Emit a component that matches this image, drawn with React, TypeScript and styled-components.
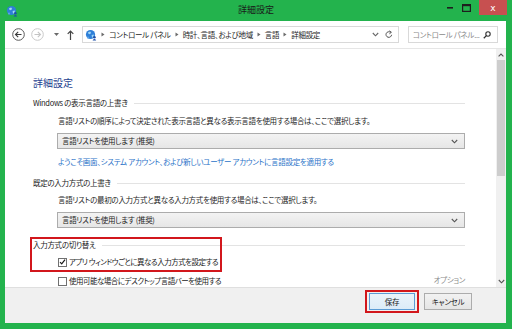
import React from 'react';
import styled, { createGlobalStyle, css } from 'styled-components';

const GlobalStyle = createGlobalStyle`
  html, body {
    margin: 0;
    padding: 0;
    width: 512px;
    height: 329px;
    overflow: hidden;
    background: #23b34d;
  }
  * { box-sizing: border-box; }
  body {
    font-family: "Noto Sans CJK JP", "Noto Sans", sans-serif;
    font-feature-settings: "palt";
    color: #1e1e1e;
  }
`;

const small = css`
  font-size: 7.5px;
  letter-spacing: -0.3px;
  line-height: 12px;
  white-space: nowrap;
`;

export const Frame = styled.div`
  width: 512px;
  height: 329px;
  display: flex;
  flex-direction: column;
  background: #23b34d;
`;

export const TitleBar = styled.div`
  height: 21px;
  display: grid;
  grid-template-columns: 1fr auto 1fr;
  align-items: start;
`;

export const AppIcon = styled.div`
  padding: 5px 0 0 6px;
  display: flex;
`;

export const Title = styled.div`
  font-size: 9px;
  line-height: 12px;
  padding-top: 4px;
  color: #1a1a1a;
`;

export const Controls = styled.div`
  justify-self: end;
  display: flex;
  align-items: flex-start;
  margin-right: 5px;
`;

export const CtlButton = styled.div`
  width: 16px;
  height: 15px;
  display: flex;
  align-items: center;
  justify-content: center;
`;

export const CloseButton = styled.div`
  width: 28px;
  height: 15px;
  margin-left: 5px;
  background: #c75050;
  color: #fff;
  font-family: "DejaVu Sans", sans-serif;
  font-size: 9px;
  display: flex;
  align-items: center;
  justify-content: center;
`;

export const Client = styled.div`
  flex: 1;
  margin: 0 6px 6px 5px;
  background: #fff;
  display: flex;
  flex-direction: column;
  min-height: 0;
`;

export const NavBar = styled.div`
  height: 28px;
  border-bottom: 1px solid #e6e6e6;
  display: flex;
  align-items: center;
  padding: 0 8px 0 7px;
`;

export const NavIcon = styled.div<{ $w: number }>`
  width: ${(p) => p.$w}px;
  display: flex;
  justify-content: center;
  align-items: center;
`;

export const Address = styled.div`
  ${small}
  width: 324px;
  height: 17px;
  margin-left: 5px;
  border: 1px solid #d9d9d9;
  display: flex;
  align-items: center;
  padding-left: 2px;
  color: #1e1e1e;
`;

export const Crumb = styled.span`
  display: flex;
  align-items: center;
  margin-left: 4px;
  gap: 4px;
`;

export const AddressTail = styled.div`
  margin-left: auto;
  display: flex;
  align-items: center;
  gap: 6px;
  padding-right: 5px;
`;

export const Search = styled.div`
  ${small}
  width: 92px;
  height: 17px;
  margin-left: 9px;
  border: 1px solid #d9d9d9;
  display: flex;
  align-items: center;
  justify-content: space-between;
  padding: 0 6px 0 4px;
  color: #8a8a8a;
`;

export const Body = styled.div`
  flex: 1;
  display: flex;
  min-height: 0;
`;

export const Content = styled.div`
  flex: 1;
  position: relative;
  padding: 27px 31px 0 28px;
  display: flex;
  flex-direction: column;
`;

export const Heading = styled.div`
  font-size: 10px;
  line-height: 14px;
  color: #1e3f8f;
`;

export const SectionTitle = styled.div<{ $mt: number }>`
  ${small}
  margin-top: ${(p) => p.$mt}px;
  display: flex;
  align-items: center;
  color: #1a1a1a;

  &::after {
    content: '';
    flex: 1;
    margin-left: 6px;
    border-top: 1px solid #e3e3e3;
  }
`;

export const Desc = styled.div<{ $mt: number }>`
  ${small}
  margin: ${(p) => p.$mt}px 0 0 25px;
  color: #262626;
`;

export const Select = styled.div<{ $mt: number }>`
  ${small}
  margin: ${(p) => p.$mt}px 0 0 24px;
  height: 16px;
  border: 1px solid #acacac;
  background: linear-gradient(#f3f3f3, #e6e6e6);
  display: flex;
  align-items: center;
  justify-content: space-between;
  padding: 0 6px 0 4px;
  color: #1e1e1e;
`;

export const LinkText = styled.div<{ $mt: number }>`
  ${small}
  margin: ${(p) => p.$mt}px 0 0 25px;
  color: #2a72c8;
`;

export const CheckRow = styled.div<{ $mt: number }>`
  ${small}
  letter-spacing: -0.5px;
  margin: ${(p) => p.$mt}px 0 0 25px;
  display: flex;
  align-items: center;
  color: #1a1a1a;
`;

export const Box = styled.div`
  width: 9px;
  height: 9px;
  border: 1px solid #707070;
  background: #fff;
  margin-right: 2px;
  display: flex;
  align-items: center;
  justify-content: center;
`;

export const Option = styled.span`
  margin-left: auto;
  margin-top: -2px;
  letter-spacing: -0.3px;
  color: #8c8c8c;
`;

export const Highlight = styled.div`
  position: absolute;
  left: 25px;
  top: 188px;
  width: 192px;
  height: 35px;
  border: 2px solid #d2171c;
  pointer-events: none;
`;

export const ScrollBar = styled.div`
  width: 10px;
  background: #f0f0f0;
  display: flex;
  flex-direction: column;
`;

export const ScrollArrow = styled.div`
  height: 11px;
  display: flex;
  align-items: center;
  justify-content: center;
`;

export const Thumb = styled.div`
  height: 116px;
  margin: 0 1px;
  background: #cdcdcd;
`;

export const Spacer = styled.div`
  flex: 1;
`;

export const Footer = styled.div`
  height: 36px;
  background: #f0f0f0;
  border-top: 1px solid #dfdfdf;
  display: flex;
  justify-content: flex-end;
  align-items: flex-start;
  padding: 2px 34px 0 0;
  gap: 5px;
`;

export const Marked = styled.div`
  border: 2px solid #d2171c;
  padding: 1px 2px;
`;

export const Button = styled.div<{ $primary?: boolean }>`
  ${small}
  width: ${(p) => (p.$primary ? 46 : 48)}px;
  height: 17px;
  margin-top: ${(p) => (p.$primary ? 0 : 3)}px;
  border: 1px solid ${(p) => (p.$primary ? '#5b9bd5' : '#acacac')};
  background: ${(p) =>
    p.$primary ? 'linear-gradient(#eaf3fb, #dcebf8)' : 'linear-gradient(#f2f2f2, #e5e5e5)'};
  display: flex;
  align-items: center;
  justify-content: center;
  color: #1a1a1a;
`;

const Globe: React.FC<{ size: number }> = ({ size }) => (
  <svg width={size} height={size} viewBox="0 0 12 12">
    <circle cx="5.5" cy="5.5" r="4.6" fill="#2f7fd8" />
    <path d="M3 3.2 L5.2 2.4 L6.2 4 L4.6 5.2 L3.4 4.8 Z" fill="#9fd6f5" />
    <path d="M6.6 6 L8.8 5.6 L8.6 7.8 L7 8.8 Z" fill="#9fd6f5" />
    <circle cx="9.4" cy="8.2" r="1.3" fill="#1d4fa8" />
    <path d="M7.6 11.4 Q9.4 8.6 11.2 11.4 Z" fill="#1d4fa8" />
    <circle cx="3" cy="8.6" r="1.1" fill="#5aa2e8" />
  </svg>
);

const Chevron: React.FC = () => (
  <svg width="4" height="5" viewBox="0 0 4 5">
    <path d="M0.5 0.5 L3.5 2.5 L0.5 4.5 Z" fill="#6b6b6b" />
  </svg>
);

const Down: React.FC<{ color?: string }> = ({ color = '#555' }) => (
  <svg width="7" height="5" viewBox="0 0 7 5">
    <path d="M0.8 1 L3.5 3.8 L6.2 1" fill="none" stroke={color} strokeWidth="1.1" />
  </svg>
);

const Check: React.FC = () => (
  <svg width="8" height="8" viewBox="0 0 8 8">
    <path d="M1.2 4.2 L3.1 6.2 L6.9 1.4" fill="none" stroke="#1a1a1a" strokeWidth="1.4" />
  </svg>
);

const App: React.FC = () => {
  return (
    <Frame>
      <GlobalStyle />
      <TitleBar>
        <AppIcon>
          <Globe size={12} />
        </AppIcon>
        <Title>詳細設定</Title>
        <Controls>
          <CtlButton>
            <svg width="7" height="3" viewBox="0 0 7 3">
              <rect x="0" y="1" width="6" height="1.6" fill="#1e1e1e" />
            </svg>
          </CtlButton>
          <CtlButton>
            <svg width="9" height="8" viewBox="0 0 9 8">
              <rect x="0.6" y="0.6" width="7.8" height="6.8" fill="none" stroke="#1e1e1e" strokeWidth="1.2" />
              <rect x="0.6" y="0.6" width="7.8" height="1.6" fill="#1e1e1e" />
            </svg>
          </CtlButton>
          <CloseButton>x</CloseButton>
        </Controls>
      </TitleBar>

      <Client>
        <NavBar>
          <NavIcon $w={14}>
            <svg width="13" height="13" viewBox="0 0 13 13">
              <circle cx="6.5" cy="6.5" r="5.8" fill="none" stroke="#5a5a5a" strokeWidth="1" />
              <path d="M9.5 6.5 H3.6 M6.2 3.8 L3.5 6.5 L6.2 9.2" fill="none" stroke="#3a3a3a" strokeWidth="1.1" />
            </svg>
          </NavIcon>
          <NavIcon $w={25}>
            <svg width="13" height="13" viewBox="0 0 13 13">
              <circle cx="6.5" cy="6.5" r="5.8" fill="none" stroke="#c9c9c9" strokeWidth="1" />
              <path d="M3.5 6.5 H9.4 M6.8 3.8 L9.5 6.5 L6.8 9.2" fill="none" stroke="#c4c4c4" strokeWidth="1.1" />
            </svg>
          </NavIcon>
          <NavIcon $w={14}>
            <svg width="5" height="3" viewBox="0 0 5 3">
              <path d="M0 0 H5 L2.5 3 Z" fill="#6a6a6a" />
            </svg>
          </NavIcon>
          <NavIcon $w={14}>
            <svg width="7" height="10" viewBox="0 0 7 10">
              <path d="M3.5 10 V1.2 M0.7 3.8 L3.5 1 L6.3 3.8" fill="none" stroke="#444" strokeWidth="1.2" />
            </svg>
          </NavIcon>
          <Address>
            <Globe size={12} />
            <Crumb>
              <Chevron />
              コントロール パネル
            </Crumb>
            <Crumb>
              <Chevron />
              時計、言語、および地域
            </Crumb>
            <Crumb>
              <Chevron />
              言語
            </Crumb>
            <Crumb>
              <Chevron />
              詳細設定
            </Crumb>
            <AddressTail>
              <Down color="#666" />
              <svg width="8" height="9" viewBox="0 0 8 9">
                <path d="M6.6 4.8 A2.8 2.8 0 1 1 5.6 2.4" fill="none" stroke="#555" strokeWidth="1" />
                <path d="M4.4 0.8 L6.4 2.3 L4.4 3.8" fill="none" stroke="#555" strokeWidth="1" />
              </svg>
            </AddressTail>
          </Address>
          <Search>
            <span>コントロール パネル...</span>
            <svg width="8" height="8" viewBox="0 0 8 8">
              <circle cx="5" cy="3" r="2.2" fill="none" stroke="#333" strokeWidth="1.1" />
              <path d="M3.4 4.6 L0.8 7.2" stroke="#333" strokeWidth="1.3" />
            </svg>
          </Search>
        </NavBar>

        <Body>
          <Content>
            <Heading>詳細設定</Heading>
            <SectionTitle $mt={7}>Windows の表示言語の上書き</SectionTitle>
            <Desc $mt={6}>
              言語リストの順序によって決定された表示言語と異なる表示言語を使用する場合は、ここで選択します。
            </Desc>
            <Select $mt={6}>
              言語リストを使用します (推奨)
              <Down />
            </Select>
            <LinkText $mt={7}>
              ようこそ画面、システム アカウント、および新しいユーザー アカウントに言語設定を適用する
            </LinkText>
            <SectionTitle $mt={9}>既定の入力方式の上書き</SectionTitle>
            <Desc $mt={5}>
              言語リストの最初の入力方式と異なる入力方式を使用する場合は、ここで選択します。
            </Desc>
            <Select $mt={6}>
              言語リストを使用します (推奨)
              <Down />
            </Select>
            <SectionTitle $mt={11}>入力方式の切り替え</SectionTitle>
            <CheckRow $mt={5}>
              <Box>
                <Check />
              </Box>
              アプリ ウィンドウごとに異なる入力方式を設定する
            </CheckRow>
            <CheckRow $mt={7}>
              <Box />
              使用可能な場合にデスクトップ言語バーを使用する
              <Option>オプション</Option>
            </CheckRow>
            <Highlight />
          </Content>
          <ScrollBar>
            <ScrollArrow>
              <svg width="6" height="4" viewBox="0 0 6 4">
                <path d="M0.6 3.4 L3 1 L5.4 3.4" fill="none" stroke="#555" strokeWidth="1.1" />
              </svg>
            </ScrollArrow>
            <Thumb />
            <Spacer />
            <ScrollArrow>
              <Down />
            </ScrollArrow>
          </ScrollBar>
        </Body>

        <Footer>
          <Marked>
            <Button $primary>保存</Button>
          </Marked>
          <Button>キャンセル</Button>
        </Footer>
      </Client>
    </Frame>
  );
};

export default App;
